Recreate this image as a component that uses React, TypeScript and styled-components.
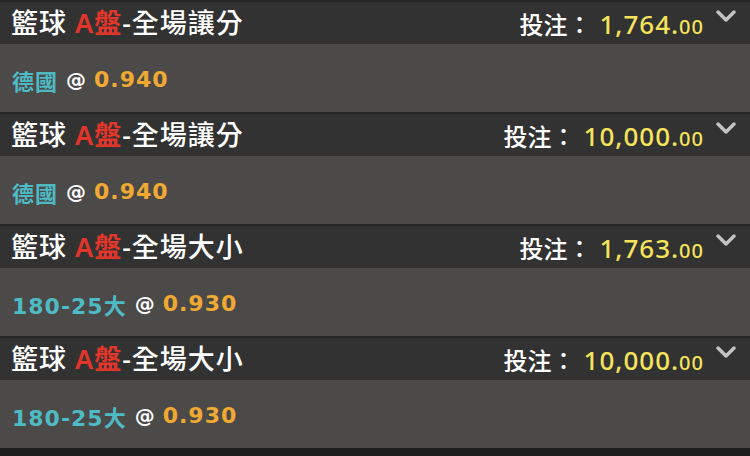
import React from 'react';
import styled, { createGlobalStyle } from 'styled-components';

const GlobalStyle = createGlobalStyle`
  html, body {
    margin: 0;
    padding: 0;
    background: #1e1e1e;
  }
  body {
    font-family: "Noto Sans", "Noto Sans CJK TC", sans-serif;
  }
`;

interface Bet {
  market: string;
  amount: string;
  pick: string;
  odds: string;
}

const bets: Bet[] = [
  { market: '全場讓分', amount: '1,764', pick: '德國', odds: '0.940' },
  { market: '全場讓分', amount: '10,000', pick: '德國', odds: '0.940' },
  { market: '全場大小', amount: '1,763', pick: '180-25大', odds: '0.930' },
  { market: '全場大小', amount: '10,000', pick: '180-25大', odds: '0.930' },
];

const Chevron = () => (
  <svg width="20" height="13" viewBox="0 0 20 13">
    <polyline points="2,2 10,10 18,2" fill="none" stroke="#c4c4c4" strokeWidth="3.4" strokeLinecap="round" strokeLinejoin="round" />
  </svg>
);

export default function App() {
  return (
    <>
      <GlobalStyle />
      <List>
        {bets.map((bet, i) => (
          <Item key={i}>
            <Header>
              <Title>
                籃球 <Red>A盤</Red>-{bet.market}
              </Title>
              <Stake>
                <StakeLabel>投注：</StakeLabel>
                <Amount>
                  {bet.amount}.<Cents>00</Cents>
                </Amount>
              </Stake>
              <Toggle>
                <Chevron />
              </Toggle>
            </Header>
            <Body>
              <Pick>{bet.pick}</Pick>
              <At>@</At>
              <Odds>{bet.odds}</Odds>
            </Body>
          </Item>
        ))}
      </List>
    </>
  );
}

const List = styled.div`
  width: 750px;
  height: 456px;
  background: #1e1e1e;
  display: flex;
  flex-direction: column;
  overflow: hidden;
`;

const Item = styled.div`
  border-top: 2px solid #262626;
  display: flex;
  flex-direction: column;
`;

const Header = styled.div`
  height: 42px;
  background: #323232;
  display: flex;
  align-items: center;
  padding: 0 14px 0 11px;
`;

const Title = styled.div`
  flex: 1;
  color: #ffffff;
  font-family: "Noto Sans", "Noto Sans CJK TC", sans-serif;
  font-size: 27px;
  font-weight: 500;
  letter-spacing: 1px;
  white-space: pre;
  line-height: 42px;
`;

const Red = styled.span`
  color: #e2362b;
  font-weight: 600;
`;

const Stake = styled.div`
  display: flex;
  align-items: baseline;
  margin-top: 2px;
`;

const StakeLabel = styled.span`
  color: #ffffff;
  font-family: "Noto Sans CJK TC", sans-serif;
  font-size: 24px;
  font-weight: 500;
  margin-right: 8px;
`;

const Amount = styled.span`
  color: #f6e45c;
  font-family: "Noto Sans", sans-serif;
  font-size: 26px;
  font-weight: 500;
  letter-spacing: 1px;
`;

const Cents = styled.span`
  font-size: 20px;
`;

const Toggle = styled.div`
  align-self: flex-start;
  margin: 8px 0 0 12px;
  display: flex;
`;

const Body = styled.div`
  height: 68px;
  box-sizing: border-box;
  padding: 3px 12px 0;
  background: #4c4949;
  display: flex;
  align-items: center;
  gap: 8px;
  font-size: 22px;
  font-weight: 700;
  font-family: "DejaVu Sans", "Noto Sans CJK TC", sans-serif;
`;

const Pick = styled.span`
  color: #4dbac4;
  letter-spacing: 1px;
`;

const At = styled.span`
  color: #ffffff;
  font-size: 20px;
`;

const Odds = styled.span`
  color: #f0a932;
  letter-spacing: 1px;
`;
